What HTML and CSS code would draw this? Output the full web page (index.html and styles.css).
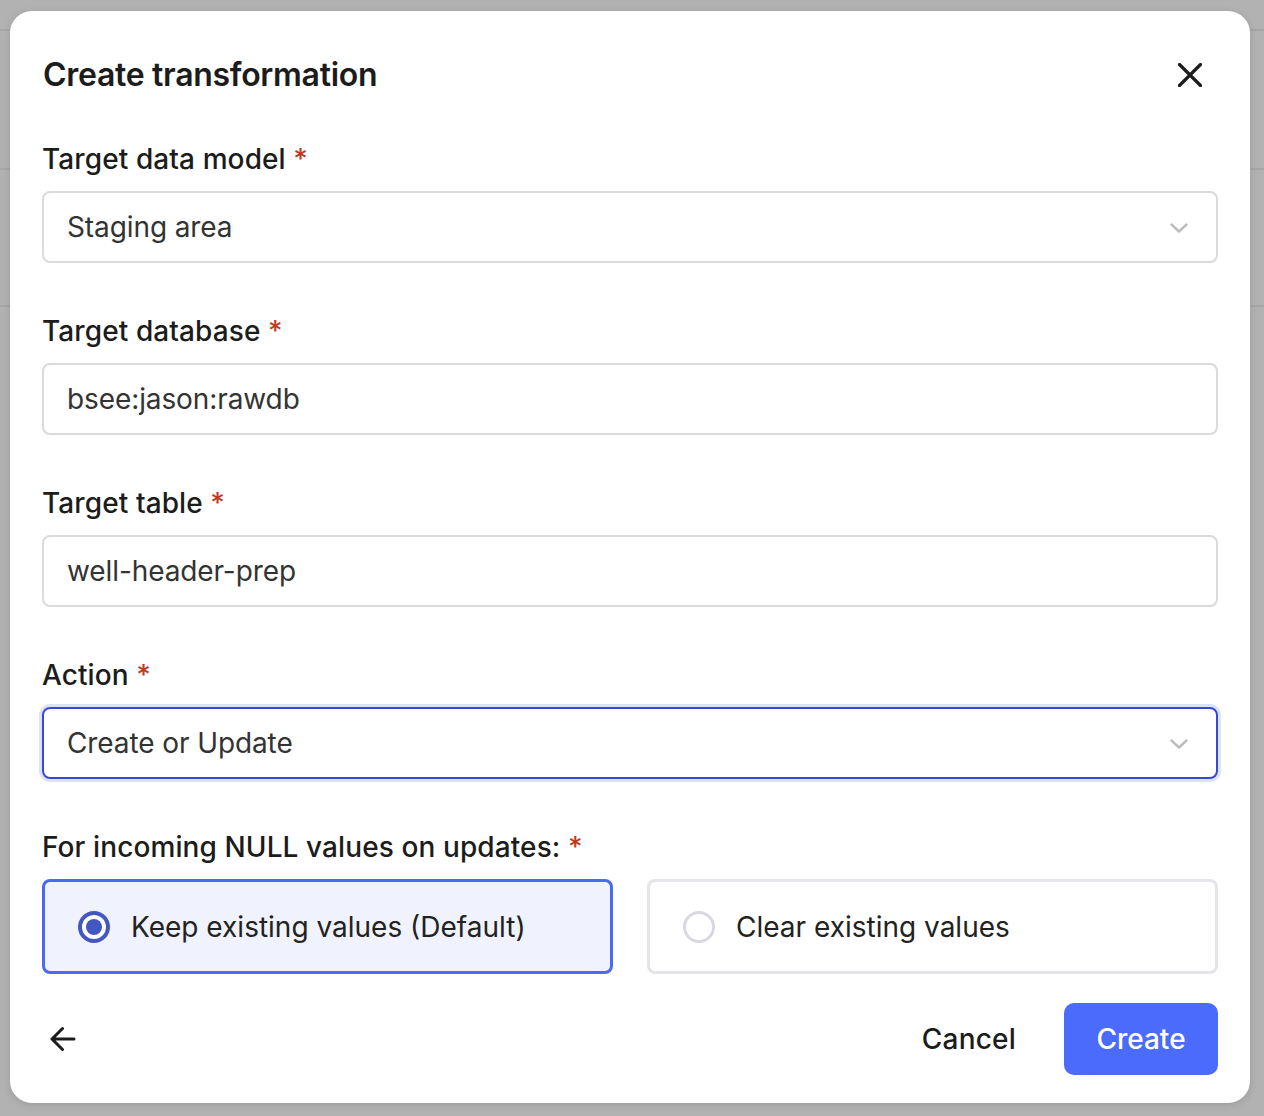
FILE: index.html
```html
<!DOCTYPE html>
<html lang="en">
<head>
<meta charset="utf-8">
<title>Create transformation</title>
<link rel="stylesheet" href="styles.css">
</head>
<body>
<div class="page">
  <div class="page-row r1"></div>
  <div class="page-row r2"></div>
  <div class="page-row r3"></div>
</div>
<div class="modal" role="dialog">
  <div class="modal-header">
    <h1 class="modal-title">Create transformation</h1>
    <svg class="close" width="24" height="24" viewBox="0 0 24 24" fill="none" stroke="#1c1c1c" stroke-width="3.2" stroke-linecap="round"><path d="M1.5 1.5 L22.5 22.5 M22.5 1.5 L1.5 22.5"/></svg>
  </div>
  <div class="form">
    <div class="field">
      <div class="label">Target data model <span class="req">*</span></div>
      <div class="input select"><span>Staging area</span>
        <svg class="chev" width="18" height="10" viewBox="0 0 18 10" fill="none" stroke="#bdbdbd" stroke-width="2.4" stroke-linecap="round" stroke-linejoin="round"><path d="M1.5 1.5 L9 8.5 L16.5 1.5"/></svg>
      </div>
    </div>
    <div class="field">
      <div class="label">Target database <span class="req">*</span></div>
      <div class="input"><span>bsee:jason:rawdb</span></div>
    </div>
    <div class="field">
      <div class="label">Target table <span class="req">*</span></div>
      <div class="input"><span>well-header-prep</span></div>
    </div>
    <div class="field">
      <div class="label">Action <span class="req">*</span></div>
      <div class="input select focused"><span>Create or Update</span>
        <svg class="chev" width="18" height="10" viewBox="0 0 18 10" fill="none" stroke="#bdbdbd" stroke-width="2.4" stroke-linecap="round" stroke-linejoin="round"><path d="M1.5 1.5 L9 8.5 L16.5 1.5"/></svg>
      </div>
    </div>
    <div class="field">
      <div class="label">For incoming NULL values on updates: <span class="req">*</span></div>
      <div class="radios">
        <div class="radio-card selected">
          <span class="radio on"></span>
          <span class="radio-text">Keep existing values (Default)</span>
        </div>
        <div class="radio-card">
          <span class="radio"></span>
          <span class="radio-text">Clear existing values</span>
        </div>
      </div>
    </div>
  </div>
  <div class="footer">
    <svg class="back" width="26" height="26" viewBox="0 0 26 26" fill="none" stroke="#1c1c1c" stroke-width="3" stroke-linecap="round" stroke-linejoin="round"><path d="M2 13 H24 M12.5 2.5 L2 13 L12.5 23.5"/></svg>
    <div class="actions">
      <span class="cancel">Cancel</span>
      <span class="btn-primary">Create</span>
    </div>
  </div>
</div>
</body>
</html>
```
FILE: styles.css
```css
* { box-sizing: border-box; }
html, body { margin: 0; padding: 0; }
body {
  width: 1264px;
  height: 1116px;
  background: #b2b2b2;
  font-family: Inter, "Noto Sans", "Liberation Sans", sans-serif;
  overflow: hidden;
  position: relative;
}
.page { display: flex; flex-direction: column; }
.page-row { border-bottom: 2px solid #a6a6a6; }
.r1 { height: 31px; }
.r2 { height: 139px; }
.r3 { height: 137px; }

.modal {
  position: absolute;
  left: 10px;
  top: 11px;
  width: 1240px;
  height: 1092px;
  background: #fff;
  border-radius: 22px;
  box-shadow: 0 2px 8px rgba(0,0,0,0.12);
  padding: 46px 32px 28px;
  display: flex;
  flex-direction: column;
  color: #1c1c1c;
}
.modal-header {
  display: flex;
  justify-content: space-between;
  align-items: center;
  height: 36px;
}
.modal-title {
  margin: 0;
  font-size: 32px;
  font-weight: 600;
  line-height: 36px;
  letter-spacing: -0.3px;
  padding-left: 1px;
}
.close { margin-right: 16px; }

.form {
  margin-top: 50px;
  display: flex;
  flex-direction: column;
  gap: 52px;
}
.field { display: flex; flex-direction: column; gap: 16px; }
.label {
  font-size: 28px;
  font-weight: 500;
  line-height: 32px;
  letter-spacing: 0.1px;
}
.req { color: #c13a1f; }
.input {
  height: 72px;
  border: 2px solid #dadada;
  border-radius: 8px;
  padding: 0 28px 0 23px;
  display: flex;
  align-items: center;
  justify-content: space-between;
  font-size: 28px;
  letter-spacing: -0.1px;
  color: #333;
}
.input.focused {
  border-color: #3549d6;
  box-shadow: 0 0 0 3px #dde2fb;
}
.chev { margin-top: 2px; }

.radios {
  display: grid;
  grid-template-columns: 1fr 1fr;
  gap: 34px;
}
.radio-card {
  height: 95px;
  border: 3px solid #e4e4e9;
  border-radius: 8px;
  display: flex;
  align-items: center;
  padding: 0 33px;
  gap: 21px;
  font-size: 28px;
  color: #222;
}
.radio-card.selected {
  border-color: #4b69f7;
  background: #f0f3fe;
}
.radio {
  width: 32px;
  height: 32px;
  border-radius: 50%;
  border: 3px solid #d8d8e0;
  background: #fff;
  flex: none;
  display: flex;
  align-items: center;
  justify-content: center;
}
.radio.on { border: 4px solid #4357c0; }
.radio.on::after {
  content: "";
  width: 16px;
  height: 16px;
  border-radius: 50%;
  background: #4357c0;
}

.footer {
  margin-top: 29px;
  display: flex;
  justify-content: space-between;
  align-items: center;
}
.back { margin-left: 8px; }
.actions { display: flex; align-items: center; gap: 48px; }
.cancel { font-size: 28px; font-weight: 500; letter-spacing: 0.2px; color: #1c1c1c; }
.btn-primary {
  height: 72px;
  width: 154px;
  border-radius: 10px;
  background: #4a6bfb;
  color: #fff;
  font-size: 28px;
  font-weight: 500;
  display: flex;
  align-items: center;
  justify-content: center;
}
```
